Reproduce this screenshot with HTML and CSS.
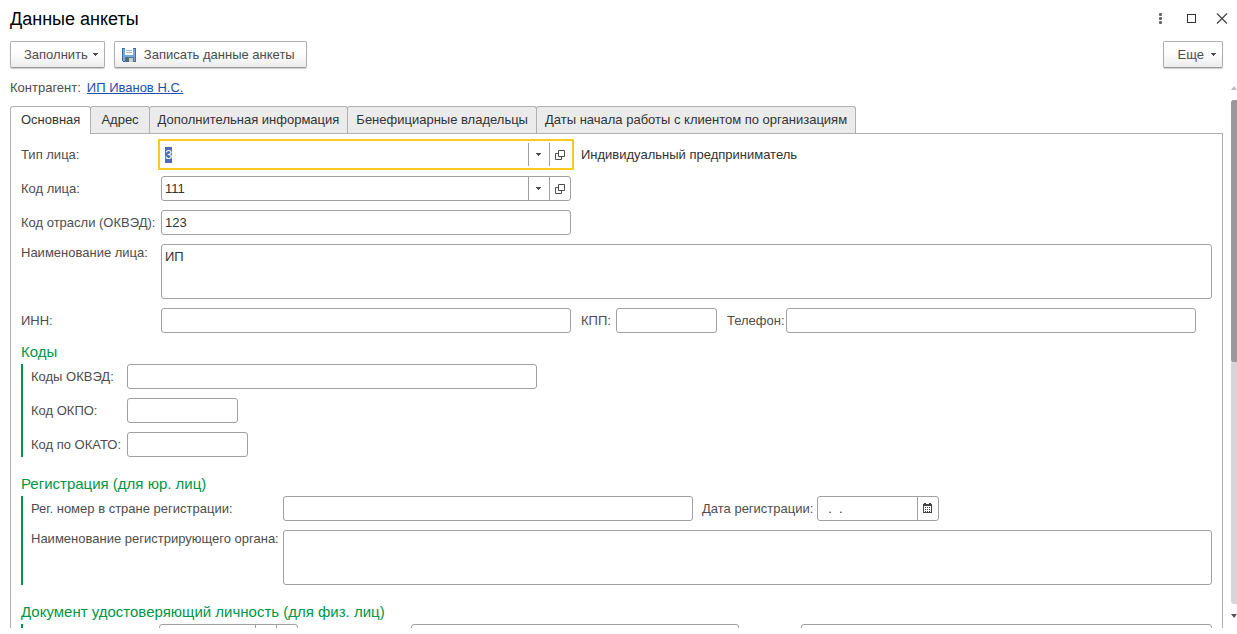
FILE: index.html
```html
<!DOCTYPE html>
<html lang="ru">
<head>
<meta charset="utf-8">
<title>Данные анкеты</title>
<link rel="stylesheet" href="styles.css">
</head>
<body>
<svg class="defs" aria-hidden="true">
  <symbol id="caret" viewBox="0 0 5 3"><path d="M0 0h5v1H4v1H3v1H2V2H1V1H0z" fill="currentColor"/></symbol>
  <symbol id="open" viewBox="0 0 10 10"><path d="M3.5.5h6v6h-6zM3 3.500H.5v6h6V7" fill="none" stroke="currentColor"/></symbol>
</svg>

<header class="titlebar">
  <h1 class="title">Данные анкеты</h1>
  <div class="window-controls">
    <button class="window-button" type="button" aria-label="Меню">
      <svg width="16" height="16" viewBox="0 0 16 16"><g fill="#666"><rect x="7" y="2" width="3" height="3" rx="1"/><rect x="7" y="6" width="3" height="3" rx="1"/><rect x="7" y="10" width="3" height="3" rx="1"/></g></svg>
    </button>
    <button class="window-button" type="button" aria-label="Развернуть">
      <svg width="16" height="16" viewBox="0 0 16 16"><rect x="4.500" y="3.500" width="8" height="8" fill="none" stroke="#333"/></svg>
    </button>
    <button class="window-button" type="button" aria-label="Закрыть">
      <svg width="16" height="16" viewBox="0 0 16 16"><path d="M3 2.500l10 10m0-10l-10 10" stroke="#444" stroke-width="1.200"/></svg>
    </button>
  </div>
</header>

<div class="toolbar">
  <button class="button button-menu" type="button">Заполнить <svg class="caret"><use href="#caret"/></svg></button>
  <button class="button button-save" type="button">
    <svg width="14" height="14" viewBox="0 0 14 14" shape-rendering="crispEdges">
      <path d="M0 0h14v14H1v-1H0z" fill="#3f6fa5"/>
      <path d="M1 1h12v12H1z" fill="#7aa7d8"/>
      <path d="M3 0h8v7H3z" fill="#fff"/>
      <path d="M4 2h6v1H4zM4 4h6v1H4z" fill="#a9b8c6"/>
      <path d="M3 9h9v5H3z" fill="#55748c"/>
      <path d="M4 10h7v4H4z" fill="#c9cfc9"/>
      <path d="M4 10h3v4H4z" fill="#4b6a84"/>
    </svg>
    Записать данные анкеты
  </button>
  <button class="button button-menu button-more" type="button">Еще <svg class="caret"><use href="#caret"/></svg></button>
</div>

<div class="workspace">
  <main class="content">
    <p class="owner">Контрагент: <a class="link" href="#owner">ИП Иванов Н.С.</a></p>

    <div class="tabs" role="tablist">
      <button class="tab tab-active" type="button" role="tab" aria-selected="true">Основная</button>
      <button class="tab" type="button" role="tab">Адрес</button>
      <button class="tab tab-long" type="button" role="tab">Дополнительная информация</button>
      <button class="tab tab-long" type="button" role="tab">Бенефициарные владельцы</button>
      <button class="tab tab-long" type="button" role="tab">Даты начала работы с клиентом по организациям</button>
    </div>

    <form class="panel">
      <div class="rows rows-main">
        <div class="row">
          <label class="label" for="type">Тип лица:</label>
          <div class="field field-wide field-focused">
            <input class="input" id="type" type="text" value="3" autofocus>
            <button class="field-button" type="button" aria-label="Выбрать"><svg class="caret"><use href="#caret"/></svg></button>
            <button class="field-button" type="button" aria-label="Открыть"><svg class="open"><use href="#open"/></svg></button>
          </div>
          <span class="hint">Индивидуальный предприниматель</span>
        </div>
        <div class="row">
          <label class="label" for="code">Код лица:</label>
          <div class="field field-wide">
            <input class="input" id="code" type="text" value="111">
            <button class="field-button" type="button" aria-label="Выбрать"><svg class="caret"><use href="#caret"/></svg></button>
            <button class="field-button" type="button" aria-label="Открыть"><svg class="open"><use href="#open"/></svg></button>
          </div>
        </div>
        <div class="row">
          <label class="label" for="industry">Код отрасли (ОКВЭД):</label>
          <div class="field field-wide"><input class="input" id="industry" type="text" value="123"></div>
        </div>
        <div class="row row-top">
          <label class="label" for="name">Наименование лица:</label>
          <textarea class="textarea" id="name">ИП</textarea>
        </div>
        <div class="row">
          <label class="label" for="inn">ИНН:</label>
          <div class="field field-wide"><input class="input" id="inn" type="text"></div>
          <label class="label-kpp" for="kpp">КПП:</label>
          <div class="field field-kpp"><input class="input" id="kpp" type="text"></div>
          <label class="label-phone" for="phone">Телефон:</label>
          <div class="field field-wide"><input class="input" id="phone" type="text"></div>
        </div>
      </div>

      <h2 class="heading heading-first">Коды</h2>
      <div class="rows group rows-codes">
        <div class="row">
          <label class="label" for="okved">Коды ОКВЭД:</label>
          <div class="field field-wide"><input class="input" id="okved" type="text"></div>
        </div>
        <div class="row">
          <label class="label" for="okpo">Код ОКПО:</label>
          <div class="field field-okpo"><input class="input" id="okpo" type="text"></div>
        </div>
        <div class="row">
          <label class="label" for="okato">Код по ОКАТО:</label>
          <div class="field field-okato"><input class="input" id="okato" type="text"></div>
        </div>
      </div>

      <h2 class="heading">Регистрация (для юр. лиц)</h2>
      <div class="rows group rows-registration">
        <div class="row">
          <label class="label" for="regnum">Рег. номер в стране регистрации:</label>
          <div class="field field-wide"><input class="input" id="regnum" type="text"></div>
          <label class="label-date" for="regdate">Дата регистрации:</label>
          <div class="field field-date">
            <input class="input" id="regdate" type="text" value="  .  .">
            <button class="field-button" type="button" aria-label="Календарь">
              <svg class="calendar" viewBox="0 0 9 10" shape-rendering="crispEdges"><path d="M0 1h1V0h2v1h3V0h2v1h1v9H0z" fill="#444"/><path d="M1 3h7v6H1z" fill="#fff"/><path d="M2 4h1v1H2zM4 4h1v1H4zM6 4h1v1H6zM2 6h1v1H2zM4 6h1v1H4zM6 6h1v1H6zM2 8h1v1H2zM4 8h1v1H4zM6 8h1v1H6z" fill="#444"/></svg>
            </button>
          </div>
        </div>
        <div class="row row-top">
          <label class="label" for="regorg">Наименование регистрирующего органа:</label>
          <textarea class="textarea" id="regorg"></textarea>
        </div>
      </div>

      <h2 class="heading">Документ удостоверяющий личность (для физ. лиц)</h2>
      <div class="rows group">
        <div class="row row-document">
          <div class="field field-doctype">
            <input class="input" type="text" aria-label="Вид документа">
            <button class="field-button" type="button" aria-label="Выбрать"><svg class="caret"><use href="#caret"/></svg></button>
            <button class="field-button" type="button" aria-label="Открыть"><svg class="open"><use href="#open"/></svg></button>
          </div>
          <div class="field field-series"><input class="input" type="text" aria-label="Серия"></div>
          <div class="field field-rest"><input class="input" type="text" aria-label="Номер"></div>
        </div>
      </div>
    </form>
  </main>

  <div class="scrollbar" aria-hidden="true">
    <svg class="arrow" viewBox="0 0 6 4"><path d="M0 4l3-4 3 4z" fill="#bdbdbd"/></svg>
    <div class="track"><div class="thumb"></div></div>
    <svg class="arrow" viewBox="0 0 6 4"><path d="M0 0h6L3 4z" fill="#555"/></svg>
  </div>
</div>
<script src="form.js"></script>
</body>
</html>
```

FILE: form.js
```js
const typeInput = document.getElementById("type");
typeInput.focus();
typeInput.select();
```

FILE: styles.css
```css
* {
  box-sizing: border-box;
}

body {
  display: flex;
  flex-direction: column;
  height: 100vh;
  margin: 0;
  padding-bottom: 6px;
  overflow: hidden;
  background: #fff;
  color: #4d4d4d;
  font: 13px/16px "Liberation Sans", Arial, sans-serif;
}

button,
input,
textarea {
  margin: 0;
  font: inherit;
  color: inherit;
}

.defs {
  position: absolute;
  width: 0;
  height: 0;
}

.titlebar {
  display: flex;
  align-items: center;
  justify-content: space-between;
  flex: none;
  height: 37px;
  padding: 0 7px 0 10px;
}

.title {
  margin: 0;
  color: #000;
  font-size: 18px;
  font-weight: normal;
  line-height: 22px;
}

.window-controls {
  display: flex;
  gap: 15px;
}

.window-button {
  display: flex;
  padding: 0;
  border: 0;
  background: none;
}

.toolbar {
  display: flex;
  flex: none;
  gap: 9px;
  padding: 4px 14px 0 10px;
}

.button {
  display: flex;
  align-items: center;
  height: 27px;
  border: 1px solid #b0b0b0;
  border-bottom-color: #999;
  border-radius: 2px;
  background: linear-gradient(#fff 40%, #ececec);
  box-shadow: 0 1px 1px #ccc;
  white-space: nowrap;
}

.button-menu {
  gap: 5px;
  padding: 0 6px 0 13px;
}

.button-save {
  gap: 8px;
  padding: 0 11px 0 7px;
}

.button-more {
  gap: 7px;
  margin-left: auto;
  padding-left: 14px;
}

.caret {
  flex: none;
  width: 5px;
  height: 3px;
}

.open {
  width: 10px;
  height: 10px;
}

.calendar {
  width: 9px;
  height: 10px;
  margin-bottom: 2px;
}

.workspace {
  display: flex;
  flex: 1;
  gap: 8px;
  min-height: 0;
}

.content {
  flex: 1;
  min-width: 0;
  padding: 12px 0 0 10px;
  overflow: hidden;
}

.owner {
  display: flex;
  gap: 6px;
  margin: 0;
}

.link {
  color: #1d50b0;
}

.tabs {
  display: flex;
  margin-top: 10px;
}

.tab {
  height: 27px;
  margin-left: -1px;
  padding: 0 10px;
  border: 1px solid #b0b0b0;
  border-bottom: 0;
  border-radius: 3px 3px 0 0;
  background: #ebebeb;
  color: #333;
  white-space: nowrap;
}

.tab-long {
  padding: 0 8px;
}

.tab-active {
  z-index: 1;
  height: 28px;
  margin: 0 0 -1px;
  padding-bottom: 2px;
  background: #fff;
}

.panel {
  padding: 8px 10px;
  border: 1px solid #b0b0b0;
}

.rows {
  display: flex;
  flex-direction: column;
  gap: 9px;
}

.row {
  display: flex;
  align-items: center;
}

.row-top {
  align-items: flex-start;
}

.row-top .label {
  padding-top: 1px;
}

.label,
.label-kpp,
.label-phone,
.label-date {
  flex: none;
  white-space: nowrap;
}

.rows-main .label {
  width: 140px;
}

.rows-codes .label {
  width: 96px;
}

.rows-registration .label {
  width: 252px;
}

.label-kpp {
  width: 45px;
  padding-left: 10px;
}

.label-phone {
  width: 69px;
  padding-left: 10px;
}

.label-date {
  width: 124px;
  padding-left: 9px;
}

.row-document {
  padding-left: 128px;
}

.field {
  display: flex;
  flex: none;
  height: 25px;
  border: 1px solid #a0a0a0;
  border-radius: 3px;
  background: #fff;
}

.field-wide {
  flex: 0 1 410px;
}

.field-kpp {
  width: 101px;
}

.field-okpo {
  width: 111px;
}

.field-okato {
  width: 121px;
}

.field-date {
  width: 122px;
}

.field-doctype {
  width: 139px;
}

.field-series {
  width: 328px;
  margin: 0 62px 0 113px;
}

.field-rest {
  flex: 1;
}

.field-focused {
  border-color: transparent;
  outline: 2px solid #fbca20;
  outline-offset: 1px;
  border-radius: 0;
}

.input {
  flex: 1;
  width: 0;
  min-width: 0;
  padding: 0 3px;
  border: 0;
  outline: 0;
  background: none;
  color: #333;
}

.input::selection {
  background: #4f69bd;
  color: #fff;
}

.field-button {
  display: flex;
  flex: none;
  align-items: center;
  justify-content: center;
  width: 21px;
  padding: 0 1px 0 0;
  border: 0;
  border-left: 1px solid #a0a0a0;
  background: none;
}

.hint {
  padding-left: 10px;
  color: #333;
  white-space: nowrap;
}

.textarea {
  flex: 1;
  height: 55px;
  padding: 4px 3px;
  border: 1px solid #a0a0a0;
  border-radius: 3px;
  outline: 0;
  resize: none;
  color: #333;
}

.heading {
  margin: 17px 0 2px;
  color: #009646;
  font-size: 15px;
  font-weight: normal;
  line-height: 20px;
}

.heading-first {
  margin-top: 9px;
}

.group {
  padding-left: 8px;
  border-left: 2px solid #009646;
}

.scrollbar {
  display: flex;
  flex: none;
  flex-direction: column;
  width: 6px;
  padding: 18px 0 10px;
}

.arrow {
  width: 6px;
  height: 4px;
}

.track {
  flex: 1;
  margin: 10px 0;
  border-radius: 3px 0 0 3px;
  background: #d6d6d6;
}

.thumb {
  height: 52%;
  border-radius: 3px 0 0 3px;
  background: #999;
}
```
